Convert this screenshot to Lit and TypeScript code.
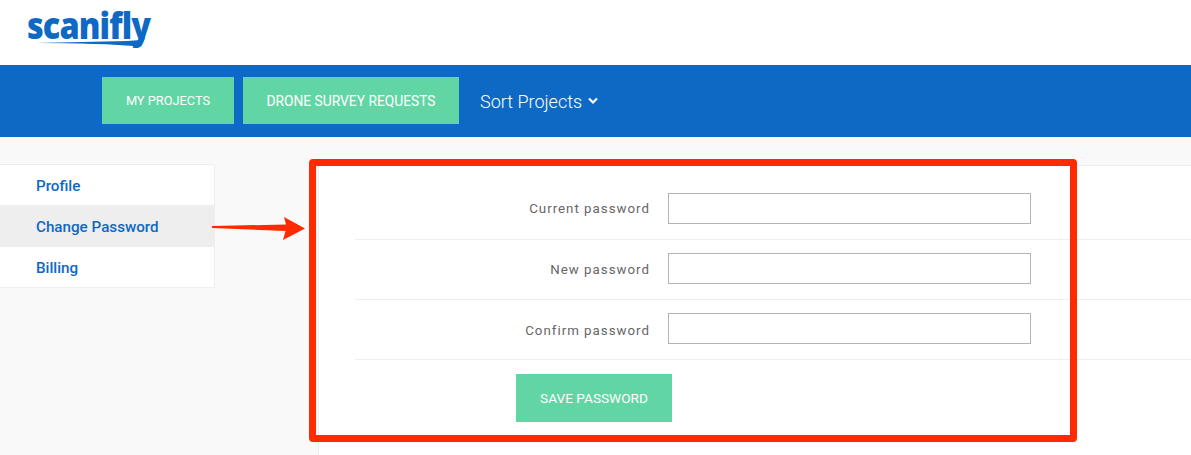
import { LitElement, html, css } from "lit";
import { customElement } from "lit/decorators.js";

@customElement("app-root")
export class AppRoot extends LitElement {
  static styles = css`
    :host {
      display: block;
      position: relative;
      height: 455px;
      overflow: hidden;
      background: #f9f9f9;
      font-family: "Roboto", "Noto Sans", sans-serif;
    }

    .top {
      height: 65px;
      background: #fff;
      padding-left: 27px;
      box-sizing: border-box;
    }

    .logo {
      position: relative;
      display: inline-block;
      width: 124px;
      height: 50px;
    }

    .logo-text {
      display: block;
      padding-top: 4px;
      font-family: "Open Sans", sans-serif;
      font-weight: 800;
      font-size: 36px;
      line-height: 44px;
      letter-spacing: -1px;
      color: #0e69c4;
      transform: scale(0.9, 1.03);
      transform-origin: 0 40px;
    }

    .swoosh {
      position: absolute;
      left: 0;
      top: 0;
    }

    .nav {
      height: 72px;
      background: #0e69c4;
      display: flex;
      align-items: flex-start;
      padding: 12px 0 0 102px;
      box-sizing: border-box;
    }

    .btn {
      display: flex;
      align-items: center;
      justify-content: center;
      background: #62d5a5;
      color: #fff;
      font-size: 13.65px;
      font-weight: 400;
      text-transform: uppercase;
      height: 47px;
      box-sizing: border-box;
      border: none;
      font-family: inherit;
    }

    .btn.mine {
      width: 132px;
      margin-right: 9px;
      font-size: 12.8px;
    }

    .btn.drone {
      width: 216px;
      font-size: 13.8px;
    }

    .sort {
      display: flex;
      align-items: center;
      gap: 6px;
      margin-left: 21px;
      height: 47px;
      padding-top: 1px;
      box-sizing: border-box;
      color: #fff;
      font-size: 18px;
      font-weight: 300;
    }

    .main {
      display: flex;
      align-items: flex-start;
      height: 318px;
    }

    .side {
      width: 215px;
      margin-top: 27px;
      flex: none;
      box-sizing: border-box;
      background: #fff;
      border: 1px solid #eee;
      border-left: none;
      font-size: 15.2px;
      font-weight: 500;
      color: #0e69c4;
    }

    .side div {
      display: flex;
      align-items: center;
      height: 40px;
      padding: 2px 0 0 36px;
      box-sizing: border-box;
    }

    .side div.active {
      height: 42px;
      background: #eee;
    }

    .panel {
      flex: 1;
      height: 290px;
      margin: 28px 0 0 103px;
      padding: 14px 0 0 36px;
      box-sizing: border-box;
      background: #fff;
      border-top: 1px solid #eee;
      border-left: 1px solid #eee;
    }

    .row {
      display: grid;
      grid-template-columns: 295px 363px;
      column-gap: 18px;
      align-items: center;
      height: 60px;
      box-sizing: border-box;
      padding-bottom: 2px;
      border-bottom: 1px solid #eee;
    }

    label {
      text-align: right;
      font-size: 13.3px;
      letter-spacing: 1px;
      color: #666;
    }

    .row + .row label {
      padding-top: 1px;
    }

    .row.last label {
      padding-top: 3px;
    }

    input {
      height: 31px;
      box-sizing: border-box;
      border: 1px solid #b4b4b4;
      background: #fff;
      padding: 0 8px;
      margin: 0;
    }

    .save {
      width: 156px;
      height: 48px;
      margin: 14px 0 0 161px;
    }

    .callout {
      position: absolute;
      left: 309px;
      top: 159px;
      width: 768px;
      height: 283px;
      box-sizing: border-box;
      border: 7px solid #ff2a00;
      border-radius: 4px;
      pointer-events: none;
    }

    .arrow {
      position: absolute;
      left: 205px;
      top: 210px;
      pointer-events: none;
    }
  `;

  render() {
    return html`
      <div class="top">
        <div class="logo">
          <span class="logo-text">scanifly</span>
          <svg class="swoosh" width="130" height="50" viewBox="0 0 130 50">
            <path d="M9 43 L100 41 L114 40 L117 37 L118 38 L114 46.5 Q70 43 9 43 Z" fill="#0e69c4" />
          </svg>
        </div>
      </div>
      <div class="nav">
        <div class="btn mine">My Projects</div>
        <div class="btn drone">Drone Survey Requests</div>
        <div class="sort">
          Sort Projects
          <svg width="10" height="8" viewBox="0 0 10 8">
            <path d="M1 1.5 L5 5.5 L9 1.5" fill="none" stroke="#fff" stroke-width="2.2" />
          </svg>
        </div>
      </div>
      <div class="main">
        <div class="side">
          <div>Profile</div>
          <div class="active">Change Password</div>
          <div>Billing</div>
        </div>
        <div class="panel">
          <div class="row"><label>Current password</label><input type="password" /></div>
          <div class="row"><label>New password</label><input type="password" /></div>
          <div class="row last"><label>Confirm password</label><input type="password" /></div>
          <button class="btn save">Save Password</button>
        </div>
      </div>
      <div class="callout"></div>
      <svg class="arrow" width="105" height="36" viewBox="205 210 105 36">
        <path d="M212 226 L286 224.5 L284 217 L305 228.5 L283 240 L285.5 231 L212 228 Z" fill="#ff2a00" />
      </svg>
    `;
  }
}

declare global {
  interface HTMLElementTagNameMap {
    "app-root": AppRoot;
  }
}
